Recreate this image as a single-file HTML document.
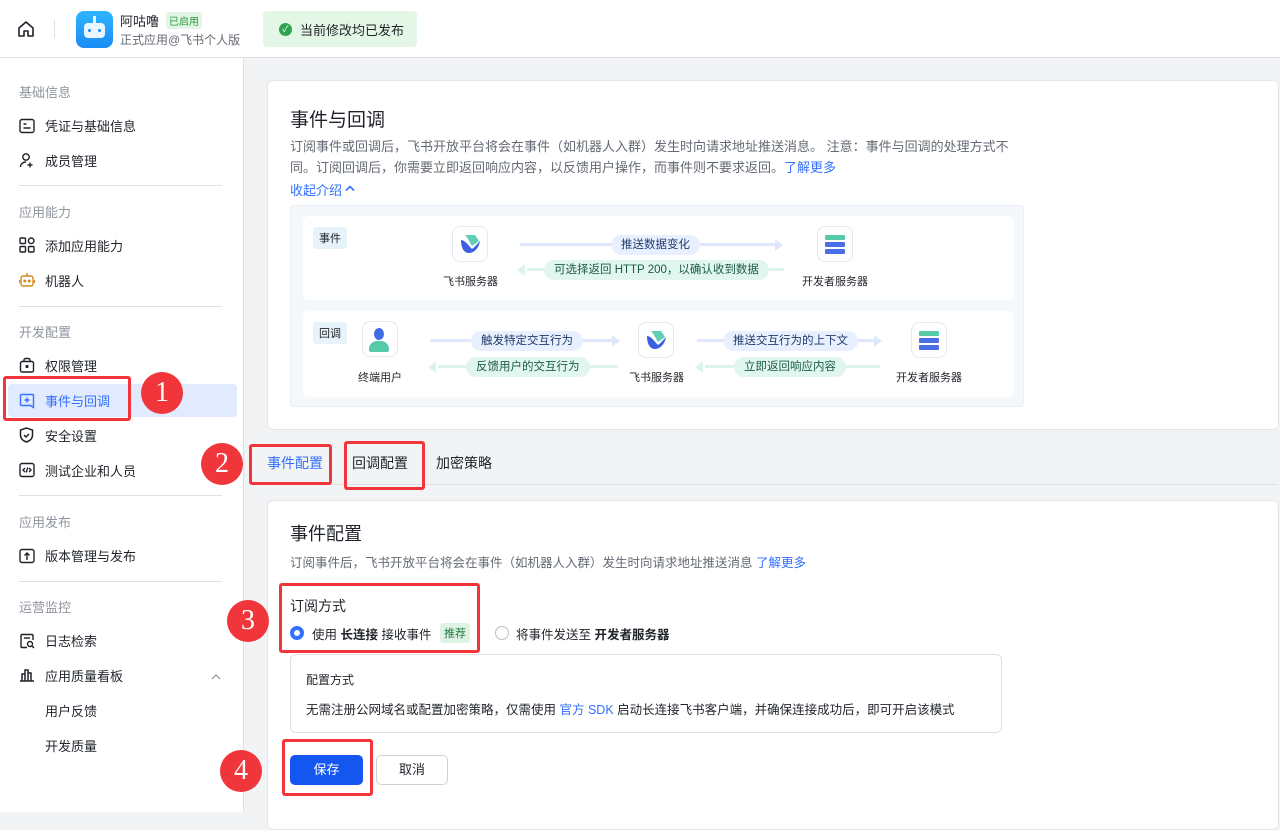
<!DOCTYPE html>
<html><head><meta charset="utf-8"><style>
*{margin:0;padding:0;box-sizing:border-box}
body{width:1280px;height:812px;overflow:hidden;background:#f2f3f5;font-family:"Liberation Sans","Noto Sans CJK SC",sans-serif;color:#1f2329;position:relative;font-size:13px}
.a{position:absolute;white-space:nowrap}
.hdr{left:0;top:0;width:1280px;height:58px;background:#fff;border-bottom:1px solid #dee0e3}
.side{left:0;top:58px;width:244px;height:754px;background:#fff;border-right:1px solid #dee0e3}
.sec{font-size:13px;color:#8f959e;left:19px}
.it{left:45px;font-size:13px;color:#1f2329}
.hr{left:19px;width:203px;height:1px;background:#dee0e3}
.card{background:#fff;border:1px solid #e5e6eb;border-radius:6px}
.red{border:3px solid #f2353b;border-radius:3px}
.num{width:42px;height:42px;border-radius:50%;background:#f0363b;color:#fff;font-family:"Liberation Serif",serif;font-size:28px;text-align:center;line-height:42px}
.pill{border-radius:11px;height:20px;line-height:20px;padding:0 10px;font-size:11.5px}
.bl{background:#e8f0ff;color:#1f3a6b}
.gr{background:#e0f6ef;color:#1c5c45}
.lbl{font-size:11px;color:#1f2329}
.box{width:36px;height:36px;border:1px solid #e3e8f2;border-radius:8px;background:#fff}
svg.i{position:absolute;left:19px}
</style></head><body>
<div class="a hdr"></div>
<svg class="a" style="left:17px;top:20px" width="18" height="18" viewBox="0 0 18 18" fill="none" stroke="#1f2329" stroke-width="1.6"><path d="M2 8L9 2l7 6v8H11v-5H7v5H2z" stroke-linejoin="round"/></svg>
<div class="a" style="left:54px;top:20px;width:1px;height:18px;background:#dee0e3"></div>
<div class="a" style="left:76px;top:11px;width:37px;height:37px;border-radius:8px;background:linear-gradient(#2fb4ff,#1a8cf5)"></div>
<div class="a" style="left:84px;top:23px;width:21px;height:15px;border-radius:4px;background:#e8f6ff"></div>
<div class="a" style="left:93px;top:16px;width:3px;height:7px;background:#e8f6ff"></div>
<div class="a" style="left:88px;top:29px;width:3px;height:3px;background:#1a8cf5;border-radius:50%"></div>
<div class="a" style="left:98px;top:29px;width:3px;height:3px;background:#1a8cf5;border-radius:50%"></div>
<div class="a" style="left:120px;top:11px;font-size:13px">阿咕噜</div>
<div class="a" style="left:166px;top:12px;font-size:10px;background:#e3f5e6;color:#2a9a3e;padding:1px 3px;border-radius:3px">已启用</div>
<div class="a" style="left:120px;top:31px;font-size:12px;color:#646a73">正式应用@飞书个人版</div>
<div class="a" style="left:263px;top:11px;width:154px;height:36px;background:#e4f7e6;border-radius:4px"></div>
<div class="a" style="left:279px;top:23px;width:13px;height:13px;border-radius:50%;background:#2ea44f;color:#fff;font-size:9px;line-height:13px;text-align:center">✓</div>
<div class="a" style="left:300px;top:20px;font-size:13px">当前修改均已发布</div>

<div class="a side"></div>
<div class="a sec" style="top:82px">基础信息</div>
<svg class="i" style="top:118px" width="16" height="16" viewBox="0 0 16 16" fill="none" stroke="#1f2329" stroke-width="1.4"><rect x="1" y="1.5" width="14" height="13" rx="2"/><path d="M4.5 6h3M4.5 10h7"/></svg>
<div class="a it" style="top:116px">凭证与基础信息</div>
<svg class="i" style="top:152px" width="16" height="16" viewBox="0 0 16 16" fill="none" stroke="#1f2329" stroke-width="1.4"><circle cx="7" cy="5" r="3.2"/><path d="M1.5 15c0-3 2.5-5 5.5-5M11 10.5v5M8.5 13h5"/></svg>
<div class="a it" style="top:151px">成员管理</div>
<div class="a hr" style="top:185px"></div>
<div class="a sec" style="top:202px">应用能力</div>
<svg class="i" style="top:237px" width="16" height="16" viewBox="0 0 16 16" fill="none" stroke="#1f2329" stroke-width="1.4"><rect x="1" y="1" width="5.5" height="5.5" rx="1"/><rect x="1" y="9.5" width="5.5" height="5.5" rx="1"/><rect x="9.5" y="9.5" width="5.5" height="5.5" rx="1"/><circle cx="12.2" cy="3.8" r="2.8"/></svg>
<div class="a it" style="top:236px">添加应用能力</div>
<svg class="i" style="top:272px" width="16" height="16" viewBox="0 0 16 16" fill="none" stroke="#d28a20" stroke-width="1.4"><rect x="2" y="4" width="12" height="10" rx="2"/><path d="M8 1v3M0.5 8v3M15.5 8v3"/><circle cx="5.8" cy="9" r=".8" fill="#d28a20"/><circle cx="10.2" cy="9" r=".8" fill="#d28a20"/></svg>
<div class="a it" style="top:271px">机器人</div>
<div class="a hr" style="top:306px"></div>
<div class="a sec" style="top:322px">开发配置</div>
<svg class="i" style="top:357px" width="16" height="16" viewBox="0 0 16 16" fill="none" stroke="#1f2329" stroke-width="1.4"><rect x="1.5" y="4.5" width="13" height="10.5" rx="1.5"/><path d="M5 4.5V3a1.5 1.5 0 011.5-1.5h3A1.5 1.5 0 0111 3v1.5"/><circle cx="8" cy="9.5" r=".9" fill="#1f2329"/></svg>
<div class="a it" style="top:356px">权限管理</div>
<div class="a" style="left:8px;top:384px;width:229px;height:33px;background:#e1eaff;border-radius:4px"></div>
<svg class="i" style="top:393px" width="16" height="16" viewBox="0 0 16 16" fill="none" stroke="#3370ff" stroke-width="1.4"><path d="M1.5 2.5a1 1 0 011-1h11a1 1 0 011 1v12l-3-2h-9a1 1 0 01-1-1z"/><path d="M8 4.5v5M5.5 7h5"/></svg>
<div class="a it" style="top:391px;color:#3370ff">事件与回调</div>
<svg class="i" style="top:427px" width="15" height="16" viewBox="0 0 15 16" fill="none" stroke="#1f2329" stroke-width="1.5"><path d="M7.5 1L1.5 3v5c0 4 3 6 6 7 3-1 6-3 6-7V3z"/><path d="M5 8l2 2 3-3"/></svg>
<div class="a it" style="top:426px">安全设置</div>
<svg class="i" style="top:462px" width="16" height="16" viewBox="0 0 16 16" fill="none" stroke="#1f2329" stroke-width="1.4"><rect x="1" y="1.5" width="14" height="13" rx="2"/><path d="M6 6L4 8l2 2M10 6l2 2-2 2M8.8 5.5l-1.6 5"/></svg>
<div class="a it" style="top:461px">测试企业和人员</div>
<div class="a hr" style="top:495px"></div>
<div class="a sec" style="top:512px">应用发布</div>
<svg class="i" style="top:548px" width="16" height="16" viewBox="0 0 16 16" fill="none" stroke="#1f2329" stroke-width="1.4"><rect x="1" y="1.5" width="14" height="13" rx="2"/><path d="M8 12V5M5.5 7.5L8 5l2.5 2.5"/></svg>
<div class="a it" style="top:546px">版本管理与发布</div>
<div class="a hr" style="top:581px"></div>
<div class="a sec" style="top:597px">运营监控</div>
<svg class="i" style="top:633px" width="16" height="16" viewBox="0 0 16 16" fill="none" stroke="#1f2329" stroke-width="1.4"><path d="M14 7V2.5a1 1 0 00-1-1H3a1 1 0 00-1 1v11a1 1 0 001 1h5"/><path d="M5 5h6"/><circle cx="11" cy="11" r="2.5"/><path d="M13 13l2 2"/></svg>
<div class="a it" style="top:631px">日志检索</div>
<svg class="i" style="top:668px" width="16" height="14" viewBox="0 0 16 14" fill="none" stroke="#1f2329" stroke-width="1.5"><path d="M1 13h14M3 13V6h3v7M6 13V2h3v11M9 13V5h3v8"/></svg>
<div class="a it" style="top:666px">应用质量看板</div>
<svg class="a" style="left:210px;top:673px" width="12" height="8" viewBox="0 0 12 8" fill="none" stroke="#8f959e" stroke-width="1.2"><path d="M2 6l4-4 4 4"/></svg>
<div class="a it" style="top:701px">用户反馈</div>
<div class="a it" style="top:736px">开发质量</div>

<div class="a card" style="left:267px;top:80px;width:1012px;height:350px"></div>
<div class="a" style="left:290px;top:105px;font-size:19px">事件与回调</div>
<div class="a" style="left:290px;top:136px;font-size:13px;color:#646a73;line-height:21px;white-space:normal;width:726px">订阅事件或回调后，飞书开放平台将会在事件（如机器人入群）发生时向请求地址推送消息。 注意：事件与回调的处理方式不同。订阅回调后，你需要立即返回响应内容，以反馈用户操作，而事件则不要求返回。<span style="color:#3370ff">了解更多</span></div>
<div class="a" style="left:290px;top:180px;font-size:13px;color:#3370ff">收起介绍</div>
<svg class="a" style="left:344px;top:184px" width="12" height="8" viewBox="0 0 12 8" fill="none" stroke="#3370ff" stroke-width="1.6"><path d="M2 6.5l4-4 4 4"/></svg>
<div class="a" style="left:290px;top:205px;width:734px;height:202px;background:#f4f8fb;border:1px solid #e8eef5;border-radius:4px"></div>
<div class="a" style="left:303px;top:216px;width:711px;height:84px;background:#fff;border-radius:6px"></div>
<div class="a" style="left:303px;top:311px;width:711px;height:86px;background:#fff;border-radius:6px"></div>
<div class="a lbl" style="left:313px;top:227px;background:#e6f3fa;padding:3px 6px;border-radius:3px">事件</div>
<div class="a lbl" style="left:313px;top:322px;background:#e6f3fa;padding:3px 6px;border-radius:3px">回调</div>
<div class="a box" style="left:452px;top:226px"></div>
<svg class="a" style="left:459px;top:234px" width="22" height="20" viewBox="0 0 22 20"><path d="M2 6c4 0 8 6 11 9 3-2 6-6 8-8-1 6-5 12-11 12C5 19 2 14 2 6z" fill="#3a5fe0"/><path d="M6 1h10l4 6-7 5C11 9 9 4 6 1z" fill="#5fd0b5"/></svg>
<div class="a lbl" style="left:443px;top:273px">飞书服务器</div>
<div class="a" style="left:520px;top:243px;width:258px;height:3px;background:#dfe7fb"></div>
<div class="a" style="left:775px;top:239px;border-left:8px solid #dfe7fb;border-top:6px solid transparent;border-bottom:6px solid transparent"></div>
<div class="a pill bl" style="left:611px;top:235px">推送数据变化</div>
<div class="a" style="left:527px;top:268px;width:257px;height:3px;background:#dcf4ec"></div>
<div class="a" style="left:517px;top:264px;border-right:8px solid #dcf4ec;border-top:6px solid transparent;border-bottom:6px solid transparent"></div>
<div class="a pill gr" style="left:544px;top:260px">可选择返回 HTTP 200，以确认收到数据</div>
<div class="a box" style="left:817px;top:226px"></div>
<div class="a" style="left:825px;top:235px;width:20px;height:5px;background:#55c9a8;border-radius:1px"></div>
<div class="a" style="left:825px;top:242px;width:20px;height:5px;background:#4a6ee8;border-radius:1px"></div>
<div class="a" style="left:825px;top:249px;width:20px;height:5px;background:#4a6ee8;border-radius:1px"></div>
<div class="a lbl" style="left:802px;top:273px">开发者服务器</div>
<div class="a box" style="left:362px;top:321px"></div>
<div class="a" style="left:374px;top:328px;width:10px;height:12px;border-radius:50%;background:#3f6de6"></div>
<div class="a" style="left:369px;top:341px;width:20px;height:11px;border-radius:8px 8px 2px 2px;background:#55c9a8"></div>
<div class="a lbl" style="left:358px;top:369px">终端用户</div>
<div class="a" style="left:430px;top:339px;width:183px;height:3px;background:#dfe7fb"></div>
<div class="a" style="left:612px;top:335px;border-left:8px solid #dfe7fb;border-top:6px solid transparent;border-bottom:6px solid transparent"></div>
<div class="a pill bl" style="left:471px;top:331px">触发特定交互行为</div>
<div class="a" style="left:438px;top:365px;width:180px;height:3px;background:#dcf4ec"></div>
<div class="a" style="left:428px;top:361px;border-right:8px solid #dcf4ec;border-top:6px solid transparent;border-bottom:6px solid transparent"></div>
<div class="a pill gr" style="left:466px;top:357px">反馈用户的交互行为</div>
<div class="a box" style="left:638px;top:322px"></div>
<svg class="a" style="left:645px;top:330px" width="22" height="20" viewBox="0 0 22 20"><path d="M2 6c4 0 8 6 11 9 3-2 6-6 8-8-1 6-5 12-11 12C5 19 2 14 2 6z" fill="#3a5fe0"/><path d="M6 1h10l4 6-7 5C11 9 9 4 6 1z" fill="#5fd0b5"/></svg>
<div class="a lbl" style="left:629px;top:369px">飞书服务器</div>
<div class="a" style="left:697px;top:339px;width:178px;height:3px;background:#dfe7fb"></div>
<div class="a" style="left:874px;top:335px;border-left:8px solid #dfe7fb;border-top:6px solid transparent;border-bottom:6px solid transparent"></div>
<div class="a pill bl" style="left:723px;top:331px">推送交互行为的上下文</div>
<div class="a" style="left:705px;top:365px;width:175px;height:3px;background:#dcf4ec"></div>
<div class="a" style="left:695px;top:361px;border-right:8px solid #dcf4ec;border-top:6px solid transparent;border-bottom:6px solid transparent"></div>
<div class="a pill gr" style="left:734px;top:357px">立即返回响应内容</div>
<div class="a box" style="left:911px;top:322px"></div>
<div class="a" style="left:919px;top:331px;width:20px;height:5px;background:#55c9a8;border-radius:1px"></div>
<div class="a" style="left:919px;top:338px;width:20px;height:5px;background:#4a6ee8;border-radius:1px"></div>
<div class="a" style="left:919px;top:345px;width:20px;height:5px;background:#4a6ee8;border-radius:1px"></div>
<div class="a lbl" style="left:896px;top:369px">开发者服务器</div>

<div class="a" style="left:267px;top:484px;width:1011px;height:1px;background:#dee0e3"></div>
<div class="a" style="left:267px;top:453px;font-size:14px;color:#3370ff">事件配置</div>
<div class="a" style="left:352px;top:453px;font-size:14px">回调配置</div>
<div class="a" style="left:436px;top:453px;font-size:14px">加密策略</div>

<div class="a card" style="left:267px;top:500px;width:1012px;height:330px"></div>
<div class="a" style="left:290px;top:520px;font-size:18px">事件配置</div>
<div class="a" style="left:290px;top:552px;font-size:12.5px;color:#646a73">订阅事件后，飞书开放平台将会在事件（如机器人入群）发生时向请求地址推送消息 <span style="color:#3370ff">了解更多</span></div>
<div class="a" style="left:290px;top:596px;font-size:14px">订阅方式</div>
<div class="a" style="left:290px;top:626px;width:14px;height:14px;border-radius:50%;border:4px solid #3370ff;background:#fff"></div>
<div class="a" style="left:312px;top:624px;font-size:12.5px">使用 <b>长连接</b> 接收事件</div>
<div class="a" style="left:440px;top:623px;font-size:11px;background:#def3e3;color:#237a3d;padding:2px 4px;border-radius:3px">推荐</div>
<div class="a" style="left:495px;top:626px;width:14px;height:14px;border-radius:50%;border:1px solid #bbbfc4"></div>
<div class="a" style="left:516px;top:624px;font-size:12.5px">将事件发送至 <b>开发者服务器</b></div>
<div class="a" style="left:290px;top:654px;width:712px;height:79px;border:1px solid #dee0e3;border-radius:6px;background:#fff"></div>
<div class="a" style="left:306px;top:671px;font-size:12px">配置方式</div>
<div class="a" style="left:306px;top:699px;font-size:12.5px">无需注册公网域名或配置加密策略，仅需使用 <span style="color:#3370ff">官方 SDK</span> 启动长连接飞书客户端，并确保连接成功后，即可开启该模式</div>
<div class="a" style="left:290px;top:755px;width:73px;height:30px;background:#1456f0;border-radius:5px;color:#fff;font-size:13px;text-align:center;line-height:30px">保存</div>
<div class="a" style="left:376px;top:755px;width:72px;height:30px;border:1px solid #d0d3d6;background:#fff;border-radius:5px;font-size:13px;text-align:center;line-height:28px">取消</div>

<div class="a red" style="left:3px;top:376px;width:128px;height:45px"></div>
<div class="a red" style="left:249px;top:444px;width:83px;height:41px"></div>
<div class="a red" style="left:344px;top:441px;width:81px;height:49px"></div>
<div class="a red" style="left:279px;top:583px;width:201px;height:70px"></div>
<div class="a red" style="left:282px;top:739px;width:91px;height:57px"></div>
<div class="a num" style="left:141px;top:372px">1</div>
<div class="a num" style="left:201px;top:443px">2</div>
<div class="a num" style="left:227px;top:600px">3</div>
<div class="a num" style="left:220px;top:750px">4</div>
</body></html>
